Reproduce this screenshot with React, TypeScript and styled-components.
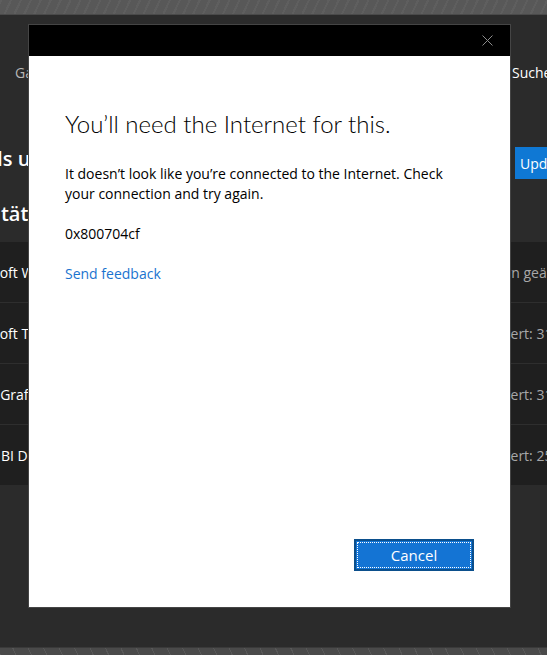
import React from 'react';
import styled, { createGlobalStyle } from 'styled-components';

const GlobalStyle = createGlobalStyle`
  html, body {
    margin: 0;
    padding: 0;
    background: #2b2b2b;
    overflow: hidden;
  }
  * {
    box-sizing: border-box;
  }
`;

const UI_FONT = `"Segoe UI", "Open Sans", "Noto Sans", sans-serif`;

// Window behind the dialog
const Screen = styled.div`
  position: relative;
  width: 547px;
  height: 655px;
  display: flex;
  flex-direction: column;
  overflow: hidden;
  font-family: ${UI_FONT};
`;

const Wallpaper = styled.div<{ $height: number }>`
  flex: 0 0 ${p => p.$height}px;
  background:
    repeating-linear-gradient(115deg, rgba(255,255,255,0.04) 0 2px, transparent 2px 9px),
    #585858;
  border-bottom: 1px solid #4a4a4a;
`;

const BottomWallpaper = styled(Wallpaper)`
  border-bottom: none;
  border-top: 1px solid #3a3a3a;
  background:
    repeating-linear-gradient(65deg, rgba(255,255,255,0.08) 0 1px, transparent 1px 14px),
    #4a4a4a;
`;

const AppArea = styled.div`
  flex: 1;
  background: #2b2b2b;
  display: flex;
  flex-direction: column;
`;

const TopBar = styled.nav`
  height: 48px;
  margin-top: 33px;
  display: flex;
  align-items: center;
  justify-content: space-between;
  padding-left: 15px;
`;

const NavItem = styled.span<{ $active?: boolean }>`
  font-size: 14px;
  color: ${p => (p.$active ? '#ffffff' : '#b8b8b8')};
  white-space: nowrap;
`;

// fixed slot at the right edge; its content runs past the window edge
const EdgeSlot = styled.div<{ $width: number }>`
  flex: 0 0 ${p => p.$width}px;
  min-width: 0;
  display: flex;
  overflow: visible;
  white-space: nowrap;
`;

const TitleRow = styled.div`
  height: 32px;
  margin-top: 51px;
  display: flex;
  align-items: center;
  justify-content: space-between;
`;

const PageHeading = styled.h1<{ $shift: number }>`
  margin: 0 0 8px ${p => p.$shift}px;
  font-size: 20px;
  font-weight: 600;
  color: #ffffff;
  white-space: nowrap;
  line-height: 28px;
`;

const AccentButton = styled.button`
  flex: 0 0 auto;
  height: 32px;
  border: none;
  padding: 0 12px 0 5px;
  background: #0f78d4;
  color: #ffffff;
  font-family: ${UI_FONT};
  font-size: 14px;
  white-space: nowrap;
`;

const SectionTitle = styled.h2<{ $shift: number }>`
  margin: 21px 0 14px ${p => p.$shift}px;
  font-size: 20px;
  font-weight: 600;
  color: #ffffff;
  white-space: nowrap;
  line-height: 28px;
`;

const ActivityList = styled.ul`
  list-style: none;
  margin: 0;
  padding: 0;
  display: flex;
  flex-direction: column;
  gap: 1px;
  background: #2e2e2e;
`;

const ActivityRow = styled.li`
  height: 60px;
  background: #1f1f1f;
  display: flex;
  align-items: center;
`;

const AppName = styled.span<{ $shift: number }>`
  flex: 1;
  min-width: 0;
  margin-left: ${p => p.$shift}px;
  font-size: 14px;
  color: #ffffff;
  white-space: nowrap;
`;

const AppMeta = styled.span`
  font-size: 14px;
  color: #a8a8a8;
`;

// Dialog
const Dialog = styled.div`
  position: absolute;
  top: 24px;
  left: 28px;
  width: 483px;
  height: 584px;
  border: 1px solid #454545;
  background: #ffffff;
  display: flex;
  flex-direction: column;
`;

const DialogTitleBar = styled.div`
  flex: 0 0 31px;
  background: #000000;
  display: flex;
  align-items: center;
  justify-content: flex-end;
  padding-right: 17px;
`;

const CloseButton = styled.button`
  width: 12px;
  height: 12px;
  padding: 0;
  border: none;
  background: none;
  display: flex;
  align-items: center;
  justify-content: center;
`;

const DialogBody = styled.div`
  flex: 1;
  display: flex;
  flex-direction: column;
  padding: 52px 36px 36px 36px;
  color: #000000;
`;

const DialogTitle = styled.h2`
  margin: 0;
  font-family: "Segoe UI Light", Lato, ${UI_FONT};
  font-weight: 300;
  font-size: 24px;
  line-height: 32px;
  color: #000000;
`;

const Paragraph = styled.p<{ $gap: number }>`
  margin: ${p => p.$gap}px 0 0 0;
  font-size: 14px;
  line-height: 20px;
`;

const FeedbackLink = styled.a`
  display: block;
  margin-top: 20px;
  font-size: 14px;
  line-height: 20px;
  color: #1a73cf;
  text-decoration: none;
`;

const DialogFooter = styled.div`
  margin-top: auto;
  display: flex;
  justify-content: flex-end;
`;

const PrimaryButton = styled.button`
  position: relative;
  width: 120px;
  height: 32px;
  border: 2px solid #0b4f8c;
  background: #1474d4;
  color: #ffffff;
  font-family: ${UI_FONT};
  font-size: 15px;
  padding: 0;

  &::after {
    content: '';
    position: absolute;
    inset: 1px;
    border: 1px dotted #ffffff;
  }
`;

const CloseIcon = () => (
  <svg width="11" height="11" viewBox="0 0 11 11">
    <path d="M0.5 0.5 L10.5 10.5 M10.5 0.5 L0.5 10.5" stroke="#8c8c8c" strokeWidth="1" />
  </svg>
);

const activities = [
  { name: 'Microsoft Whiteboard', meta: 'Gestern geändert' },
  { name: 'Microsoft To Do', meta: 'Installiert: 31.01.2020' },
  { name: 'Intel® Grafik-Kontrollcenter', meta: 'Installiert: 31.01.2020' },
  { name: 'Power BI Desktop', meta: 'Installiert: 25.01.2020' },
];

export default function App() {
  return (
    <>
      <GlobalStyle />
      <Screen>
        <Wallpaper $height={15} />
        <AppArea>
          <TopBar>
            <NavItem>Gaming</NavItem>
            <EdgeSlot $width={35}>
              <NavItem $active>Suchen</NavItem>
            </EdgeSlot>
          </TopBar>
          <TitleRow>
            <PageHeading $shift={-95}>Downloads und Updates</PageHeading>
            <EdgeSlot $width={32}>
              <AccentButton>Updates abrufen</AccentButton>
            </EdgeSlot>
          </TitleRow>
          <SectionTitle $shift={-118}>Letzte Aktivitäten</SectionTitle>
          <ActivityList>
            {activities.map(a => (
              <ActivityRow key={a.name}>
                <AppName $shift={-44}>{a.name}</AppName>
                <EdgeSlot $width={79}>
                  <AppMeta>{a.meta}</AppMeta>
                </EdgeSlot>
              </ActivityRow>
            ))}
          </ActivityList>
        </AppArea>
        <BottomWallpaper $height={8} />

        <Dialog role="dialog">
          <DialogTitleBar>
            <CloseButton aria-label="Close">
              <CloseIcon />
            </CloseButton>
          </DialogTitleBar>
          <DialogBody>
            <DialogTitle>You’ll need the Internet for this.</DialogTitle>
            <Paragraph $gap={24}>
              It doesn’t look like you’re connected to the Internet. Check your connection and try again.
            </Paragraph>
            <Paragraph $gap={20}>0x800704cf</Paragraph>
            <FeedbackLink href="#">Send feedback</FeedbackLink>
            <DialogFooter>
              <PrimaryButton>Cancel</PrimaryButton>
            </DialogFooter>
          </DialogBody>
        </Dialog>
      </Screen>
    </>
  );
}
